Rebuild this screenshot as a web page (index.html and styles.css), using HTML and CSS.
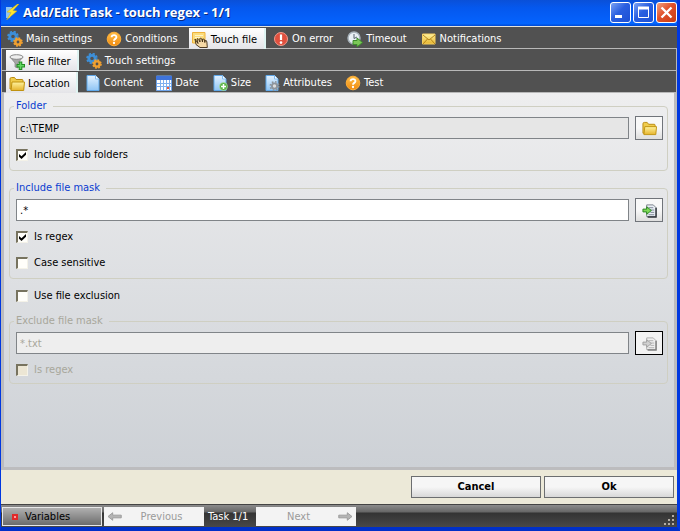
FILE: index.html
```html
<!DOCTYPE html>
<html lang="en">
<head>
<meta charset="utf-8">
<title>Add/Edit Task - touch regex - 1/1</title>
<link rel="stylesheet" href="styles.css">
</head>
<body>
<svg class="defs" aria-hidden="true">
  <defs>
    <linearGradient id="gold" x1="0" y1="0" x2="0" y2="1"><stop offset="0" stop-color="#fff3a0"/><stop offset="1" stop-color="#e6b42c"/></linearGradient>
    <linearGradient id="orange" x1="0" y1="0" x2="0" y2="1"><stop offset="0" stop-color="#ffc04a"/><stop offset="1" stop-color="#f08a10"/></linearGradient>
    <linearGradient id="sheet" x1="0" y1="0" x2="0" y2="1"><stop offset="0" stop-color="#e4f2ff"/><stop offset="1" stop-color="#8fc4f4"/></linearGradient>
    <symbol id="gears" viewBox="0 0 16 16">
      <circle cx="6" cy="5.500" r="3.200" fill="none" stroke="#3d8fd8" stroke-width="2.800"/>
      <circle cx="6" cy="5.500" r="4.900" fill="none" stroke="#3d8fd8" stroke-width="1.800" stroke-dasharray="2.200 1.650"/>
      <circle cx="11" cy="11" r="2.600" fill="none" stroke="#f0a030" stroke-width="2.400"/>
      <circle cx="11" cy="11" r="4" fill="none" stroke="#f0a030" stroke-width="1.600" stroke-dasharray="1.800 1.340"/>
    </symbol>
    <symbol id="question" viewBox="0 0 16 16">
      <circle cx="8" cy="8" r="6.800" fill="url(#orange)" stroke="#ffae35"/>
      <path d="M5.600 6.300C5.700 3.400 10.500 3.400 10.400 6.200C10.300 7.900 8 7.900 8 9.800" fill="none" stroke="#fff" stroke-width="1.900"/>
      <circle cx="8" cy="12" r="1.150" fill="#fff"/>
    </symbol>
    <symbol id="folder" viewBox="0 0 16 16">
      <path d="M1 13V3Q1 1.500 2.500 1.500H5.500L7 3.500H13Q14 3.500 14 4.500V13Z" fill="#f0cc4c" stroke="#b98a10"/>
      <path d="M2 14.500L3 6H15.500L14.700 14.500Z" fill="url(#gold)" stroke="#c0920f"/>
    </symbol>
    <symbol id="page" viewBox="0 0 16 16">
      <path d="M2 .5H10.500L14 4V15.500H2Z" fill="url(#sheet)" stroke="#5fa8ea"/>
      <path d="M10.500 .5V4H14" fill="#fff" stroke="#82bdf0"/>
    </symbol>
    <symbol id="import" viewBox="0 0 16 16">
      <path d="M5 2H12L15 5V14.500H5Z" fill="#e9eef4" stroke="#777f8a"/>
      <path d="M15 5V15H6" fill="none" stroke="#30343a" stroke-width="1.500"/>
      <path d="M7 5H12M9 7.500H13M9 10H13M7 12.500H13" stroke="#7b8592"/>
      <path d="M1 6.500H5V4L10 8L5 12V9.500H1Z" fill="#7ed957" stroke="#28811f"/>
    </symbol>
    <symbol id="arrow" viewBox="0 0 16 10">
      <path d="M15.500 3.500H6V.8L.8 5L6 9.200V6.500H15.500Z" fill="#b4b4b4" stroke="#999"/>
    </symbol>
  </defs>
</svg>

<div class="window">
  <header class="titlebar">
    <svg class="icon" viewBox="0 0 16 16" aria-hidden="true"><path d="M2 3H8L6 14H2Z" fill="#8ec4f2"/><path d="M13.500 0L3 8L7 8.500L2.500 16L13 7L9 6.500L15 0Z" fill="#ffe62e" stroke="#c8a818" stroke-width=".5"/></svg>
    <h1>Add/Edit Task - touch regex - 1/1</h1>
    <button class="caption" aria-label="Minimize"><svg viewBox="0 0 21 21"><path d="M5 14.500H12" stroke="#fff" stroke-width="3"/></svg></button>
    <button class="caption" aria-label="Maximize"><svg viewBox="0 0 21 21"><path d="M5.500 6V15.500H15.500V6" fill="none" stroke="#fff"/><path d="M5 6H16" stroke="#fff" stroke-width="3"/></svg></button>
    <button class="caption close" aria-label="Close"><svg viewBox="0 0 21 21"><path d="M5.500 5.500L15.500 15.500M15.500 5.500L5.500 15.500" stroke="#fff" stroke-width="2.400"/></svg></button>
  </header>

  <main class="client">
    <nav class="tabs outer">
      <button class="tab"><svg class="icon"><use href="#gears"/></svg>Main settings</button>
      <button class="tab"><svg class="icon"><use href="#question"/></svg>Conditions</button>
      <button class="tab active"><svg class="icon" viewBox="0 0 16 16"><path d="M.5 .5H13V11H.5Z" fill="#fbdc7c" stroke="#efb23c"/><path d="M3 3.500H11M3 5.500H9" stroke="#fff3c6"/><path d="M3 7L6 11.500L5 7Q6 6 6.700 7.500L8 10L7.800 6.500Q9 5.500 9.800 7L10.500 10L10.700 7Q12 6.500 12.500 8L12.800 10.500L13.300 8.500Q14.700 8 14.900 10L15.300 15.500H8L4 12.500Z" fill="#f6d9a6" stroke="#3d2a12" stroke-width=".9"/></svg>Touch file</button>
      <button class="tab"><svg class="icon" viewBox="0 0 16 16"><circle cx="8" cy="8" r="6.500" fill="#e0503e" stroke="#f29a8c"/><path d="M8 3.500V9" stroke="#fff" stroke-width="2.200"/><circle cx="8" cy="11.600" r="1.300" fill="#fff"/></svg>On error</button>
      <button class="tab"><svg class="icon" viewBox="0 0 16 16"><circle cx="7" cy="7" r="6" fill="#e9f0f5" stroke="#a7b2ba" stroke-width="1.500"/><path d="M7 3V7.500L10 6" fill="none" stroke="#56636e"/><path d="M6 9.500H10V7L15.500 11.500L10 16V13.500H6Z" fill="#7cc858" stroke="#3c8a2c"/></svg>Timeout</button>
      <button class="tab"><svg class="icon" viewBox="0 0 16 16"><path d="M1.500 3H14V13H1.500Z" fill="url(#gold)" stroke="#f5cf62"/><path d="M2 4L8 9L14 4M2 13L6.500 8M14 13L9.500 8" fill="none" stroke="#b5851a"/></svg>Notifications</button>
    </nav>
    <nav class="tabs inner">
      <button class="tab active"><svg class="icon" viewBox="0 0 16 16"><path d="M1 3L6 9V13L9 14V9L14 3Z" fill="#a6a6a6" stroke="#777" stroke-width=".6"/><ellipse cx="7.500" cy="3" rx="6.500" ry="2.300" fill="#eee" stroke="#888"/><path d="M11.500 7.500V16M7.500 11.700H16" stroke="#238a23" stroke-width="3.600"/><path d="M11.500 8.500V15M8.500 11.700H15" stroke="#62d662" stroke-width="1.600"/></svg>File filter</button>
      <button class="tab"><svg class="icon"><use href="#gears"/></svg>Touch settings</button>
    </nav>
    <nav class="tabs inner">
      <button class="tab active"><svg class="icon"><use href="#folder"/></svg>Location</button>
      <button class="tab"><svg class="icon"><use href="#page"/></svg>Content</button>
      <button class="tab"><svg class="icon" viewBox="0 0 16 16"><path d="M.5 1H15.500V15.500H.5Z" fill="#fff" stroke="#6fa4ea"/><path d="M0 1H16V5H0Z" fill="#3f74dc"/><path d="M4.500 5V15M7.500 5V15M10.500 5V15M13.500 5V15M1 8.500H15M1 11.500H15" stroke="#7fb0ee"/><path d="M11 12H13V14H11Z" fill="#ed5b3a"/></svg>Date</button>
      <button class="tab"><svg class="icon" viewBox="0 0 16 16"><use href="#page"/><circle cx="11.500" cy="11.500" r="4" fill="#57b344" stroke="#bfe6b4" stroke-width=".6"/><path d="M11.500 9V14M9 11.500H14" stroke="#fff" stroke-width="1.500"/></svg>Size</button>
      <button class="tab"><svg class="icon" viewBox="0 0 16 16"><use href="#page"/><circle cx="10.500" cy="11" r="2.600" fill="#ddd" stroke="#8d949c" stroke-width="1.800"/><circle cx="10.500" cy="11" r="4.200" fill="none" stroke="#8d949c" stroke-width="1.600" stroke-dasharray="1.700 1.600"/></svg>Attributes</button>
      <button class="tab"><svg class="icon"><use href="#question"/></svg>Test</button>
    </nav>

    <form class="panel">
      <fieldset>
        <legend>Folder</legend>
        <div class="field">
          <input type="text" class="readonly" value="c:\TEMP" aria-label="Folder" readonly>
          <button type="button" class="pick" aria-label="Browse"><svg class="icon small"><use href="#folder"/></svg></button>
        </div>
        <label class="check"><input type="checkbox" checked>Include sub folders</label>
      </fieldset>
      <fieldset>
        <legend>Include file mask</legend>
        <div class="field">
          <input type="text" value=".*" aria-label="Include file mask">
          <button type="button" class="pick" aria-label="Insert include mask"><svg class="icon small"><use href="#import"/></svg></button>
        </div>
        <label class="check"><input type="checkbox" checked>Is regex</label>
        <label class="check"><input type="checkbox">Case sensitive</label>
      </fieldset>
      <label class="check standalone"><input type="checkbox">Use file exclusion</label>
      <fieldset class="compact" disabled>
        <legend>Exclude file mask</legend>
        <div class="field">
          <input type="text" value="*.txt" aria-label="Exclude file mask">
          <button type="button" class="pick" aria-label="Insert exclude mask"><svg class="icon small"><use href="#import"/></svg></button>
        </div>
        <label class="check"><input type="checkbox">Is regex</label>
      </fieldset>
    </form>

    <div class="actions">
      <button class="action">Cancel</button>
      <button class="action">Ok</button>
    </div>
  </main>

  <footer class="statusbar">
    <button class="variables"><svg class="dot" viewBox="0 0 6 6"><path d="M0 0H6V6H0Z" fill="#e02a2a"/><path d="M2 2H4V4H2Z" fill="#ff9c9c"/></svg>Variables</button>
    <button class="step" disabled><svg class="arrow"><use href="#arrow"/></svg><span>Previous</span></button>
    <span class="count">Task 1/1</span>
    <button class="step" disabled><span>Next</span><svg class="arrow flip"><use href="#arrow"/></svg></button>
    <svg class="grip" viewBox="0 0 12 12" aria-hidden="true"><path d="M8 1h2v2h-2zM4 5h2v2h-2zM8 5h2v2h-2zM0 9h2v2h-2zM4 9h2v2h-2zM8 9h2v2h-2z" fill="#b4aea6"/></svg>
  </footer>
</div>
</body>
</html>
```
FILE: styles.css
```css
* {
  box-sizing: border-box;
}

body {
  margin: 0;
  font: 11px/14px "DejaVu Sans Condensed", "DejaVu Sans", sans-serif;
  color: #000;
}

button,
input {
  font: inherit;
  color: inherit;
  margin: 0;
}

button {
  padding: 0;
}

.defs {
  position: absolute;
  width: 0;
  height: 0;
}

.icon {
  flex: none;
  width: 16px;
  height: 16px;
}

.icon.small {
  width: 15px;
  height: 15px;
}

.window {
  display: flex;
  flex-direction: column;
  min-height: 100vh;
  border: solid #0038e0;
  border-width: 0 3px 4px 1px;
  border-bottom-color: #0030c8;
  background: #ece9d8;
}

.titlebar {
  display: flex;
  align-items: center;
  gap: 2px;
  height: 27px;
  padding: 0 0 2px 3px;
  border-bottom: 1px solid #e4e4dc;
  background: linear-gradient(#0a50d8, #0558ee 30%, #0560fa 75%, #0366ff 90%, #0048d0);
}

.titlebar h1 {
  flex: 1;
  margin: 0 0 0 1px;
  font: bold 13px/18px "Open Sans", "Noto Sans", sans-serif;
  color: #fff;
  text-shadow: 1px 1px #0a2a80;
}

.caption {
  width: 21px;
  height: 21px;
  border: 1px solid #fff;
  border-radius: 3px;
  background: linear-gradient(135deg, #7ba2f4, #2a5fe0 45%, #1c4fd4);
}

.caption svg {
  display: block;
  width: 21px;
  height: 21px;
  margin: -1px;
}

.caption.close {
  background: linear-gradient(135deg, #f0a080, #e0502a 45%, #c83c14);
}

.client {
  flex: 1;
  display: flex;
  flex-direction: column;
}

.tabs {
  display: flex;
  height: 22px;
  padding-top: 1px;
  border-bottom: 1px solid #b8b8b8;
  background: #515151;
}

.tabs.outer {
  padding-left: 3px;
}

.tabs.inner {
  padding-left: 4px;
  border-left: 1px solid #b8b8b8;
  border-right: 1px solid #b8b8b8;
}

.tab {
  display: flex;
  align-items: center;
  gap: 3px;
  padding: 2px 7px 0 3px;
  margin-right: 4px;
  border: 0;
  background: none;
  color: #fff;
}

.inner .tab {
  padding-right: 6px;
}

.tab.active {
  margin-bottom: -1px;
  border-right: 2px solid #dff4f2;
  background: linear-gradient(#fff, #e4e4e8);
  color: #000;
}

.panel {
  flex: 1;
  padding: 6px 6px 0 5px;
  border: 3px solid #bcbcbe;
  border-top: 0;
  background: linear-gradient(#eeeeef, #cdd1d6);
}

fieldset {
  min-width: 0;
  margin: 0 0 10px;
  padding: 3px 4px 8px 6px;
  border: 1px solid #cfcfc2;
  border-radius: 4px;
}

fieldset.compact {
  padding-bottom: 6px;
}

legend {
  margin-left: -2px;
  padding: 0 6px 0 2px;
  color: #0a3cd0;
}

.field {
  display: flex;
  align-items: center;
  gap: 6px;
  margin-bottom: 8px;
}

.field input {
  flex: 1;
  min-width: 0;
  height: 22px;
  padding: 0 3px;
  border: 1px solid #808488;
  border-radius: 0;
  background: #fff;
}

.field input.readonly {
  background: #e6e6e6;
}

.pick {
  display: flex;
  align-items: center;
  justify-content: center;
  width: 28px;
  height: 24px;
  border: 1px solid #70747a;
  background: linear-gradient(#f8f8f8 50%, #dedede);
}

.check {
  display: flex;
  align-items: center;
  gap: 6px;
  width: fit-content;
}

.check + .check {
  margin-top: 12px;
}

.check.standalone {
  margin: 0 0 11px 7px;
}

.check input {
  appearance: none;
  width: 12px;
  height: 12px;
  border: solid #f4f2e8;
  border-width: 1px;
  border-top: 2px solid #77735f;
  border-left: 2px solid #77735f;
  background: #fffefa;
}

.check input:checked::before {
  content: "";
  display: block;
  width: 7px;
  height: 7px;
  margin: 1px;
  background: #000;
  clip-path: polygon(0 30%, 36% 62%, 100% 0, 100% 38%, 36% 100%, 0 68%);
}

fieldset:disabled,
fieldset:disabled legend {
  color: #a8a79b;
}

fieldset:disabled .field input {
  background: #eee;
}

fieldset:disabled .pick {
  border-color: #000;
  background: #f3f3f3;
}

fieldset:disabled .icon {
  filter: grayscale(1);
  opacity: 0.6;
}

fieldset:disabled .check input {
  background: #ece6d4;
}

.actions {
  display: flex;
  justify-content: flex-end;
  gap: 3px;
  padding: 6px 3px;
}

.action {
  width: 130px;
  height: 22px;
  border: 1px solid #6c6e70;
  background: linear-gradient(#f6f6f6 50%, #d8d8d8);
  font-weight: bold;
}

.statusbar {
  display: flex;
  align-items: center;
  height: 23px;
  padding: 2px 1px 1px;
  border-top: 1px solid #444;
  background: linear-gradient(#8c8c8c, #666 7px, #333 8px, #484848);
}

.variables {
  display: flex;
  align-items: center;
  gap: 7px;
  width: 100px;
  height: 19px;
  padding-left: 9px;
  margin-right: 2px;
  border: 1px solid #e8e8e8;
  background: linear-gradient(#b0b0b0, #6c6c6c);
}

.dot {
  width: 6px;
  height: 6px;
}

.step {
  display: flex;
  align-items: center;
  width: 100px;
  height: 19px;
  padding: 0 3px;
  border: 0;
  background: #f3f3f3;
  color: #9a9a9a;
}

.step span {
  flex: 1;
}

.arrow {
  width: 15px;
  height: 9px;
}

.arrow.flip {
  transform: scaleX(-1);
}

.count {
  width: 52px;
  padding-left: 4px;
  color: #fff;
  white-space: nowrap;
}

.grip {
  width: 12px;
  height: 12px;
  margin-left: auto;
  align-self: flex-end;
}
```
